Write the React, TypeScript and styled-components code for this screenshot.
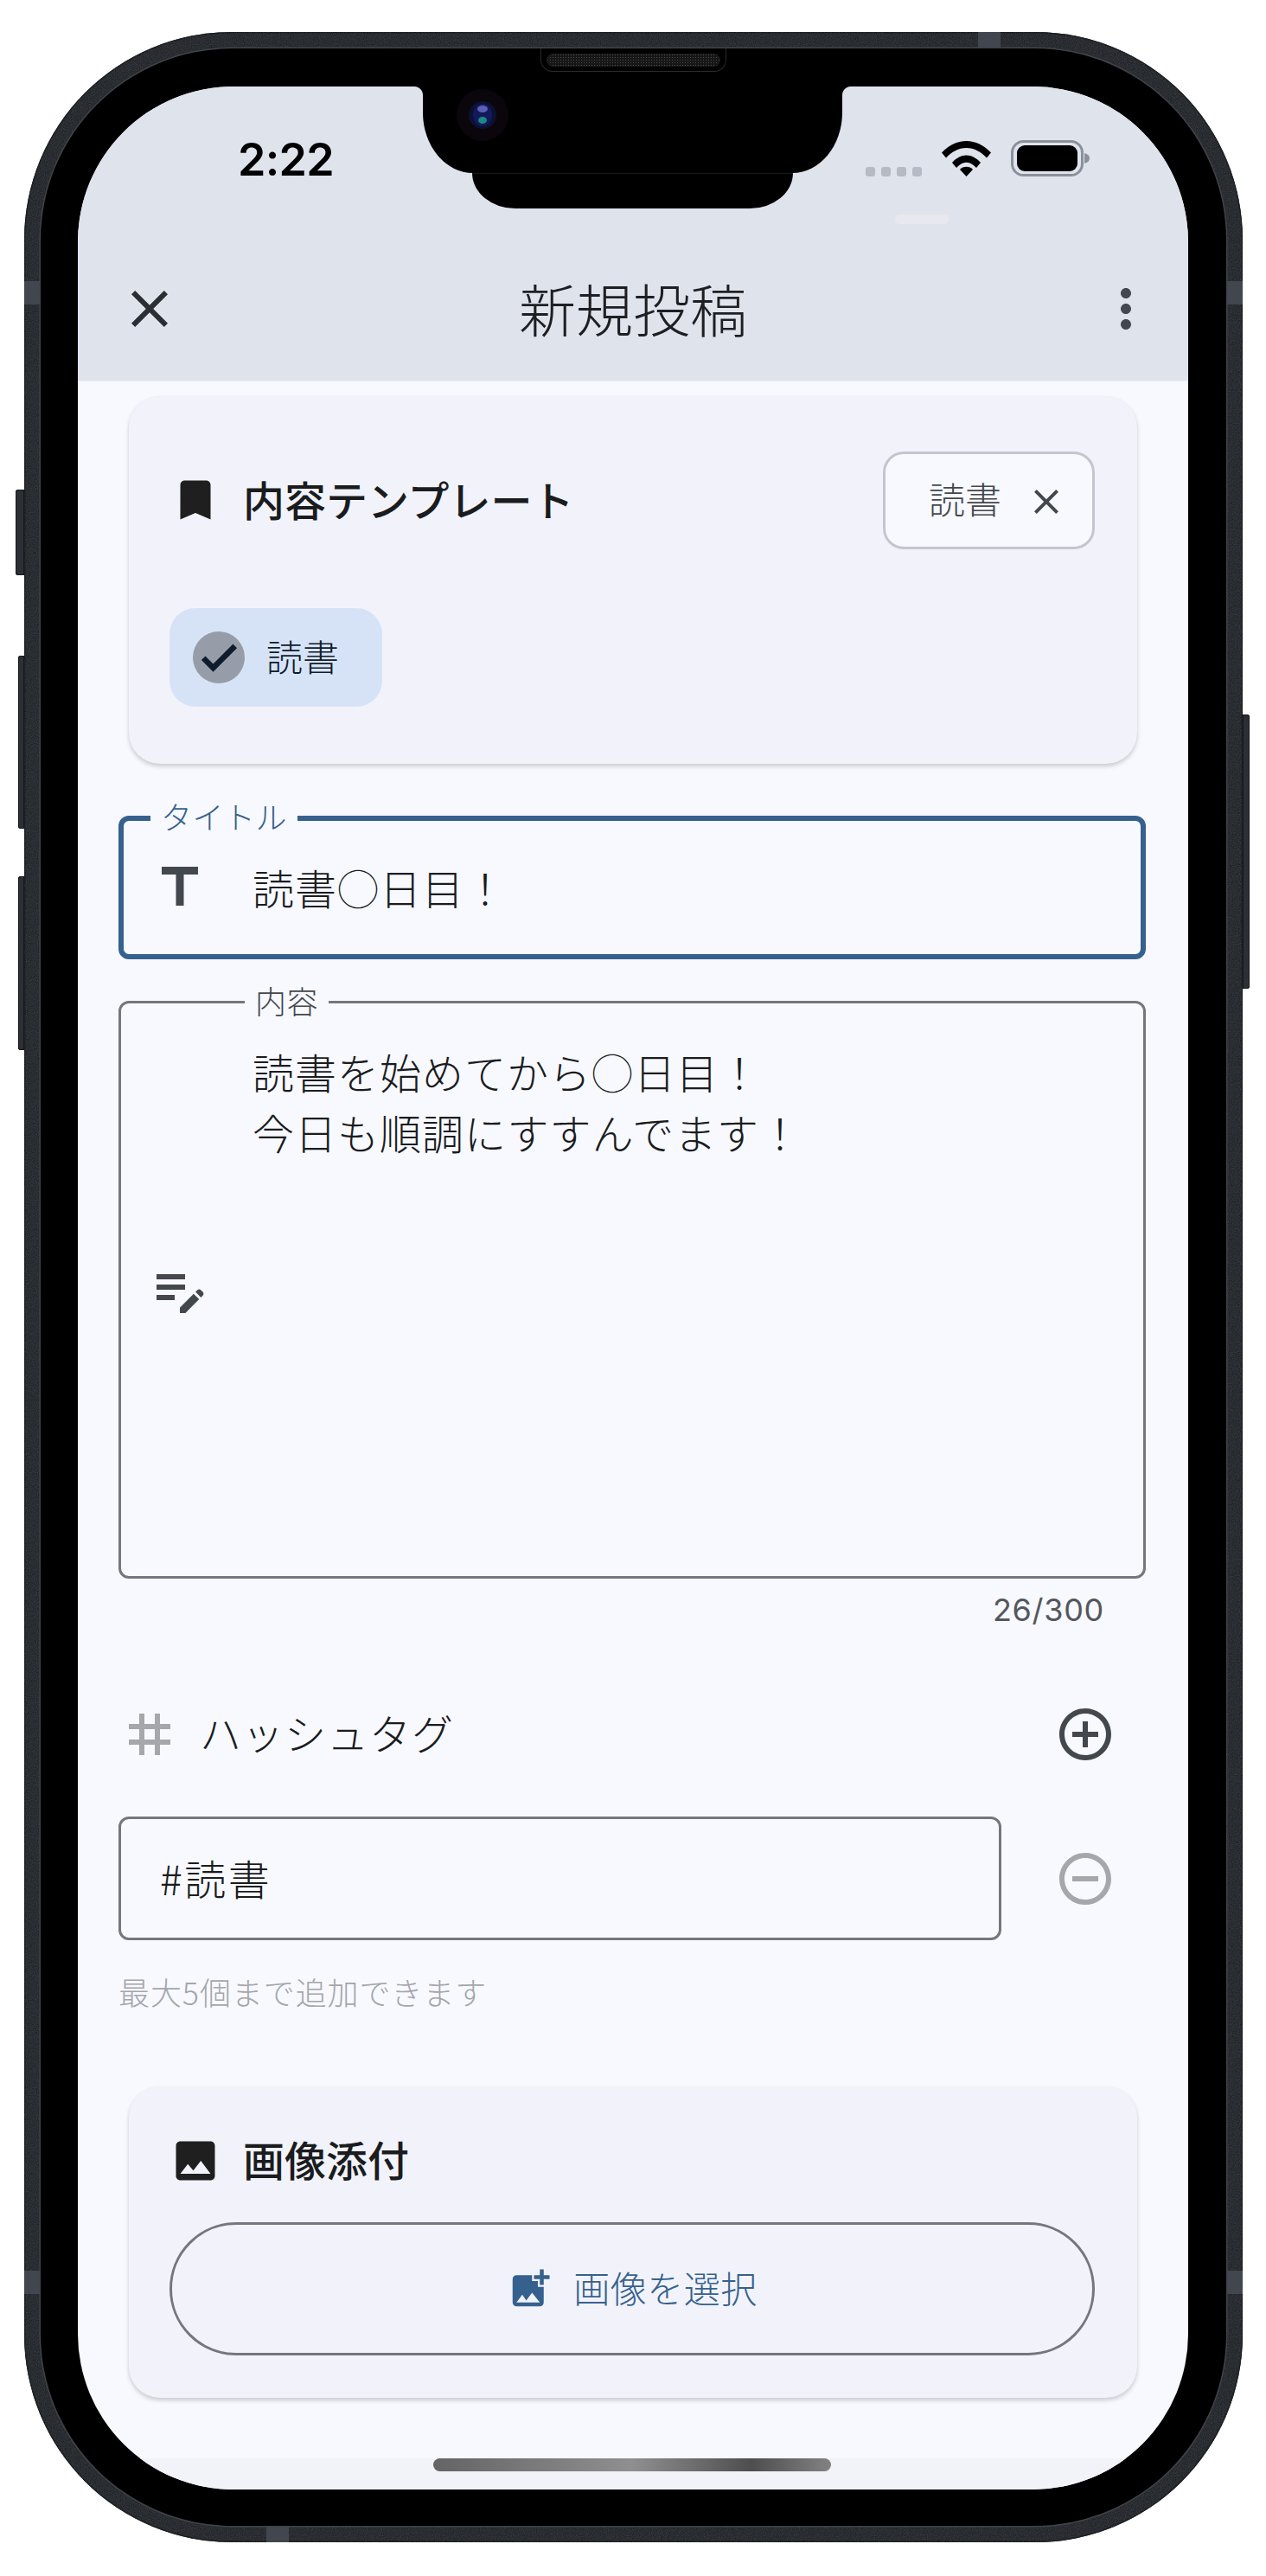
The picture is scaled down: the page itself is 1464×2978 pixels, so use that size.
import React from 'react';
import styled, { createGlobalStyle } from 'styled-components';
import {
    MdAddCircleOutline,
    MdAddPhotoAlternate,
    MdBookmark,
    MdCheck,
    MdClose,
    MdEditNote,
    MdImage,
    MdMoreVert,
    MdRemoveCircleOutline,
    MdTag,
    MdTitle,
} from 'react-icons/md';

const Global = createGlobalStyle`
    html, body { margin: 0; padding: 0; background: #fff; }
    body { font-family: "Noto Sans CJK JP", "Noto Sans", sans-serif; }
    * { box-sizing: border-box; }
`;

const Page = styled.div`
    width: 1464px;
    height: 2978px;
    padding: 37px 0 0 28px;
    overflow: hidden;
`;

/* ---------- device ---------- */
const Device = styled.div`
    position: relative;
    width: 1409px;
    height: 2902px;
    border-radius: 240px;
    background: #1f2327;
    padding: 19px;
    box-shadow: inset 0 0 0 1.5px #14171a;
`;

const BandTexture = styled.svg`
    position: absolute;
    inset: 0;
    border-radius: 240px;
    opacity: 0.16;
`;

const Bezel = styled.div`
    position: relative;
    width: 100%;
    height: 100%;
    background: #000;
    border-radius: 222px;
    padding: 44px 43px 42px 43px;
    box-shadow: 0 0 0 1.5px #3f444a;
`;

const SideButton = styled.span<{ $side: 'left' | 'right'; $top: number; $depth: number; $len: number }>`
    position: absolute;
    ${(p) => p.$side}: ${(p) => -p.$depth}px;
    top: ${(p) => p.$top}px;
    width: ${(p) => p.$depth}px;
    height: ${(p) => p.$len}px;
    background: #2c3036;
    border-radius: ${(p) => (p.$side === 'left' ? '3px 0 0 3px' : '0 3px 3px 0')};
    box-shadow: inset 0 0 0 1px #15181b;
`;

const Antenna = styled.span<{ $x?: number; $y?: number; $horizontal?: boolean; $bottom?: boolean; $right?: boolean }>`
    position: absolute;
    background: #41464f;
    ${(p) =>
        p.$horizontal
            ? `left: ${p.$x}px; width: 26px; height: 19px; ${p.$bottom ? 'bottom: 0;' : 'top: 0;'}`
            : `top: ${p.$y}px; height: 27px; width: 19px; ${p.$right ? 'right: 0;' : 'left: 0;'}`}
`;

const Screen = styled.div`
    position: relative;
    width: 1284px;
    height: 2778px;
    border-radius: 180px;
    overflow: hidden;
    background: #f8f9ff;
    display: flex;
    flex-direction: column;
`;

const NotchUpper = styled.div`
    position: absolute;
    top: 0;
    left: 399px;
    width: 485px;
    height: 100px;
    background: #000;
    border-radius: 0 0 58px 58px / 0 0 70px 70px;
    z-index: 3;

    &::before,
    &::after {
        content: '';
        position: absolute;
        top: 0;
        width: 10px;
        height: 10px;
    }
    &::before {
        left: -10px;
        background: radial-gradient(circle at 0 100%, transparent 9.5px, #000 10.5px);
    }
    &::after {
        right: -10px;
        background: radial-gradient(circle at 100% 100%, transparent 9.5px, #000 10.5px);
    }
`;

const NotchLower = styled.div`
    position: absolute;
    top: 100px;
    left: 456px;
    width: 371px;
    height: 41px;
    background: #000;
    border-radius: 0 0 50px 50px / 0 0 41px 41px;
    border-top: 1px solid #1b1b1b;
    z-index: 3;
`;

const Speaker = styled.div`
    position: absolute;
    top: 19px;
    left: 597px;
    width: 215px;
    height: 27px;
    border-radius: 0 0 14px 14px;
    border: 1px solid #2b2b2e;
    border-top: none;
    display: flex;
    align-items: center;
    justify-content: center;
`;

const Grille = styled.div`
    width: 201px;
    height: 15px;
    border-radius: 8px;
    background-color: #161617;
    background-image: radial-gradient(#4c4c4f 0.8px, transparent 1px);
    background-size: 3px 3px;
    box-shadow: inset 0 0 0 1px #1c1c1e;
`;

const Camera = styled.svg`
    position: absolute;
    top: 3px;
    left: 438px;
    z-index: 4;
`;

const Smudge = styled.span`
    position: absolute;
    top: 148px;
    left: 945px;
    width: 62px;
    height: 11px;
    border-radius: 6px;
    background: #e8e9ee;
`;

/* ---------- status + app bar ---------- */
const Header = styled.header`
    height: 341px;
    background: #dfe3ec;
    border-bottom: 1px solid #eceef4;
    flex: none;
    position: relative;
`;

const StatusBar = styled.div`
    height: 148px;
    display: flex;
    align-items: flex-end;
    justify-content: space-between;
    padding: 0 112px 0 185px;
`;

const Clock = styled.div`
    font-family: Inter, "Liberation Sans", sans-serif;
    font-size: 52px;
    font-weight: 600;
    letter-spacing: -0.7px;
    line-height: 64px;
    color: #000;
    margin-bottom: 31px;
`;

const StatusIcons = styled.div`
    display: flex;
    align-items: flex-end;
    margin-bottom: 44px;
`;

const SignalDots = styled.div`
    display: flex;
    gap: 7px;
    margin-right: 23px;
`;

const SignalDot = styled.span`
    width: 11px;
    height: 11px;
    border-radius: 3px;
    background: #b6bac4;
`;

const AppBar = styled.div`
    height: 166px;
    margin-top: 26px;
    display: flex;
    align-items: center;
    justify-content: space-between;
    padding: 0 36px 0 47px;
    position: relative;
`;

const BarIcon = styled.span<{ $color: string }>`
    display: flex;
    color: ${(p) => p.$color};
`;

const BarTitle = styled.h1`
    margin: -4px 0 0;
    font-size: 66px;
    font-weight: 300;
    line-height: 84px;
    color: #1d1f23;
    position: absolute;
    left: 0;
    right: 0;
    text-align: center;
    pointer-events: none;
`;

/* ---------- body ---------- */
const Body = styled.main`
    flex: 1;
    padding: 17px 49px 0 47px;
    display: flex;
    flex-direction: column;
`;

const Card = styled.section<{ $height: number; $top?: number }>`
    margin: ${(p) => p.$top ?? 0}px 10px 0 12px;
    height: ${(p) => p.$height}px;
    flex: none;
    background: #f2f3fa;
    border-radius: 36px;
    padding: 0 49px 0 47px;
    box-shadow: 0 3px 5px rgba(0, 0, 0, 0.18), 0 0 1px rgba(0, 0, 0, 0.05);
`;

const CardHead = styled.div<{ $height: number; $pad?: number }>`
    display: flex;
    align-items: center;
    justify-content: space-between;
    height: ${(p) => p.$height}px;
    padding-top: ${(p) => p.$pad ?? 0}px;
`;

const CardTitle = styled.div`
    display: flex;
    align-items: center;
    gap: 25px;
    font-size: 48px;
    font-weight: 500;
    line-height: 64px;
    color: #1a1c1e;
`;

const CardLabel = styled.span`
    margin-top: -5px;
`;

const CardIcon = styled.span`
    display: flex;
    color: #1f1f1f;
`;

const InputChip = styled.div`
    width: 245px;
    height: 113px;
    border: 3px solid #c3c6cf;
    border-radius: 24px;
    background: #f8f9ff;
    display: flex;
    align-items: center;
    padding-left: 50px;
    gap: 28px;
    font-size: 42px;
    line-height: 56px;
    color: #43474e;
    font-weight: 300;
`;

const ChipLabel = styled.span`
    margin-top: -4px;
`;

const ChipClose = styled.span`
    display: flex;
    color: #43474e;
    margin-top: 4px;
`;

const FilterChip = styled.div`
    width: 246px;
    height: 114px;
    margin-top: 5px;
    border-radius: 30px;
    background: #d6e3f7;
    display: flex;
    align-items: center;
    padding-left: 27px;
    gap: 25px;
    font-size: 42px;
    line-height: 56px;
    color: #101c2b;
    font-weight: 300;
`;

const CheckCircle = styled.span`
    width: 60px;
    height: 60px;
    border-radius: 50%;
    background: #969da8;
    color: #0f1c2e;
    display: flex;
    align-items: center;
    justify-content: center;

    svg path:last-child {
        stroke: currentColor;
        stroke-width: 1px;
    }
`;

const Field = styled.div<{ $height: number; $active?: boolean; $offset: number }>`
    position: relative;
    height: ${(p) => p.$height}px;
    margin-top: ${(p) => p.$offset}px;
    border: ${(p) => (p.$active ? '6px solid #36618e' : '3px solid #74777f')};
    border-radius: 12px;
    display: flex;
    align-items: center;
    padding-left: ${(p) => (p.$active ? 29 : 32)}px;
`;

const FieldLabel = styled.label<{ $left: number; $active?: boolean }>`
    position: absolute;
    top: ${(p) => (p.$active ? -27 : -25)}px;
    left: ${(p) => p.$left}px;
    padding: 0 12px;
    background: #f8f9ff;
    font-size: 36px;
    line-height: 42px;
    font-weight: 300;
    letter-spacing: 0.5px;
    color: ${(p) => (p.$active ? '#36618e' : '#43474e')};
`;

const FieldIcon = styled.span<{ $color: string }>`
    display: flex;
    flex: none;
    color: ${(p) => p.$color};
`;

const FieldValue = styled.div`
    margin: -3px 0 0 48px;
    font-size: 48px;
    line-height: 70px;
    font-weight: 300;
    letter-spacing: 1px;
    color: #1a1c1e;
`;

const FieldText = styled(FieldValue)`
    position: absolute;
    top: 43px;
    left: 152px;
    margin: 0;
`;

const Counter = styled.div`
    text-align: right;
    padding-right: 48px;
    margin-top: 12px;
    font-family: Inter, "Noto Sans", sans-serif;
    font-size: 36px;
    line-height: 48px;
    letter-spacing: 0.7px;
    color: #54575e;
`;

const HashRow = styled.div`
    display: flex;
    align-items: center;
    margin-top: 78px;
    height: 84px;
    padding-right: 34px;
`;

const HashLabel = styled.div`
    flex: 1;
    margin-left: 22px;
    margin-top: -6px;
    font-size: 48px;
    line-height: 64px;
    font-weight: 300;
    letter-spacing: 1px;
    color: #1a1c1e;
`;

const TagRow = styled.div`
    display: flex;
    align-items: center;
    margin-top: 53px;
    padding-right: 34px;
`;

const TagInput = styled.div`
    width: 1021px;
    height: 143px;
    border: 3px solid #74777f;
    border-radius: 12px;
    display: flex;
    align-items: center;
    padding: 0 0 3px 45px;
    margin-right: auto;
    font-size: 48px;
    line-height: 64px;
    font-weight: 300;
    letter-spacing: 2.5px;
    color: #1a1c1e;
`;

const Hint = styled.div`
    margin-top: 37px;
    font-size: 36px;
    line-height: 44px;
    font-weight: 300;
    letter-spacing: 0.9px;
    color: #a4a6ac;
`;

const PickButton = styled.div`
    width: 1070px;
    height: 154px;
    border: 3px solid #74777f;
    border-radius: 77px;
    display: flex;
    align-items: center;
    justify-content: center;
    gap: 23px;
    font-size: 42px;
    line-height: 56px;
    font-weight: 300;
    letter-spacing: 0.5px;
    color: #36618e;
`;

const BottomPanel = styled.div`
    position: absolute;
    left: 0;
    right: 0;
    bottom: 0;
    height: 36px;
    background: #f2f3f9;
    border-radius: 48px 48px 0 0;
`;

const HomeIndicator = styled.div`
    position: absolute;
    left: 411px;
    bottom: 21px;
    width: 460px;
    height: 15px;
    border-radius: 8px;
    background: linear-gradient(90deg, #646464 0%, #8f8f8f 50%, #4e4e4e 80%, #828282 100%);
    z-index: 2;
`;

const WifiGlyph = styled.svg`
    margin-right: 23px;
`;

const Wifi = () => (
    <WifiGlyph width="57" height="41" viewBox="0 0 57 41">
        <path d="M0 13.5C8 5 18 0 28.5 0S49 5 57 13.5l-5 6C45.5 12.5 37.5 8 28.5 8S11.5 12.5 5 19.5z" />
        <path d="M12 25C17 19.5 22.5 16.5 28.5 16.5S40 19.5 45 25l-5 6c-3.5-3.8-7-6.2-11.5-6.2S20.5 27.2 17 31z" />
        <path d="M21 33c2-2 4.5-3.2 7.5-3.2S34 31 36 33l-7.5 8z" />
    </WifiGlyph>
);

const Battery = () => (
    <svg width="93" height="42" viewBox="0 0 93 42">
        <rect x="1.5" y="1.5" width="81" height="39" rx="13" fill="none" stroke="#8c909b" strokeWidth="3" />
        <rect x="7" y="6" width="70" height="30" rx="9" fill="#000" />
        <path d="M85 15c4 1 6 3 6 6s-2 5-6 6z" fill="#8c909b" />
    </svg>
);

export default function App() {
    return (
        <Page>
            <Global />
            <Device>
                <BandTexture width="1409" height="2902">
                    <filter id="grain">
                        <feTurbulence type="fractalNoise" baseFrequency="0.9" numOctaves="2" />
                        <feColorMatrix values="0 0 0 0 1  0 0 0 0 1  0 0 0 0 1  0 0 0 1.2 -0.3" />
                    </filter>
                    <rect width="1409" height="2902" filter="url(#grain)" />
                </BandTexture>
                <SideButton $side="left" $top={529} $depth={10} $len={99} />
                <SideButton $side="left" $top={721} $depth={7} $len={200} />
                <SideButton $side="left" $top={976} $depth={7} $len={201} />
                <SideButton $side="right" $top={789} $depth={8} $len={317} />
                <Antenna $y={288} />
                <Antenna $y={288} $right />
                <Antenna $y={2588} />
                <Antenna $y={2588} $right />
                <Antenna $horizontal $x={1103} />
                <Antenna $horizontal $bottom $x={280} />
                <Bezel>
                    <Screen>
                        <NotchUpper />
                        <NotchLower />
                        <Camera width="60" height="60" viewBox="0 0 60 60">
                            <circle cx="30" cy="30" r="30" fill="#0a060b" />
                            <circle cx="30" cy="30" r="16" fill="#0b1230" />
                            <ellipse cx="30" cy="30" rx="11" ry="13" fill="#14185c" />
                            <ellipse cx="30" cy="23" rx="6" ry="4" fill="#5a5fb8" />
                            <ellipse cx="30" cy="36" rx="5" ry="4" fill="#1a8a82" />
                        </Camera>
                        <Header>
                            <StatusBar>
                                <Clock>2:22</Clock>
                                <StatusIcons>
                                    <SignalDots>
                                        <SignalDot />
                                        <SignalDot />
                                        <SignalDot />
                                        <SignalDot />
                                    </SignalDots>
                                    <Wifi />
                                    <Battery />
                                </StatusIcons>
                            </StatusBar>
                            <Smudge />
                            <AppBar>
                                <BarIcon $color="#2b2e33">
                                    <MdClose size={72} />
                                </BarIcon>
                                <BarTitle>新規投稿</BarTitle>
                                <BarIcon $color="#43474e">
                                    <MdMoreVert size={72} />
                                </BarIcon>
                            </AppBar>
                        </Header>
                        <Body>
                            <Card $height={425}>
                                <CardHead $height={240}>
                                    <CardTitle>
                                        <CardIcon>
                                            <MdBookmark size={60} />
                                        </CardIcon>
                                        <CardLabel>内容テンプレート</CardLabel>
                                    </CardTitle>
                                    <InputChip>
                                        <ChipLabel>読書</ChipLabel>
                                        <ChipClose>
                                            <MdClose size={48} />
                                        </ChipClose>
                                    </InputChip>
                                </CardHead>
                                <FilterChip>
                                    <CheckCircle>
                                        <MdCheck size={52} />
                                    </CheckCircle>
                                    <ChipLabel>読書</ChipLabel>
                                </FilterChip>
                            </Card>
                            <Field $height={166} $offset={60} $active>
                                <FieldLabel $left={31} $active>
                                    タイトル
                                </FieldLabel>
                                <FieldIcon $color="#43474e">
                                    <MdTitle size={72} />
                                </FieldIcon>
                                <FieldValue>読書◯日目！</FieldValue>
                            </Field>
                            <Field $height={668} $offset={48}>
                                <FieldLabel $left={143}>内容</FieldLabel>
                                <FieldIcon $color="#43474e">
                                    <MdEditNote size={72} />
                                </FieldIcon>
                                <FieldText>
                                    読書を始めてから◯日目！
                                    <br />
                                    今日も順調にすすんでます！
                                </FieldText>
                            </Field>
                            <Counter>26/300</Counter>
                            <HashRow>
                                <FieldIcon $color="#a6a7aa">
                                    <MdTag size={72} />
                                </FieldIcon>
                                <HashLabel>ハッシュタグ</HashLabel>
                                <FieldIcon $color="#43474e">
                                    <MdAddCircleOutline size={72} />
                                </FieldIcon>
                            </HashRow>
                            <TagRow>
                                <TagInput>#読書</TagInput>
                                <FieldIcon $color="#a6a7ac">
                                    <MdRemoveCircleOutline size={72} />
                                </FieldIcon>
                            </TagRow>
                            <Hint>最大5個まで追加できます</Hint>
                            <Card $height={360} $top={88}>
                                <CardHead $height={157} $pad={14}>
                                    <CardTitle>
                                        <CardIcon>
                                            <MdImage size={60} />
                                        </CardIcon>
                                        <CardLabel>画像添付</CardLabel>
                                    </CardTitle>
                                </CardHead>
                                <PickButton>
                                    <FieldIcon $color="#36618e">
                                        <MdAddPhotoAlternate size={54} />
                                    </FieldIcon>
                                    <ChipLabel>画像を選択</ChipLabel>
                                </PickButton>
                            </Card>
                        </Body>
                        <BottomPanel />
                        <HomeIndicator />
                    </Screen>
                </Bezel>
                <Speaker>
                    <Grille />
                </Speaker>
            </Device>
        </Page>
    );
}
